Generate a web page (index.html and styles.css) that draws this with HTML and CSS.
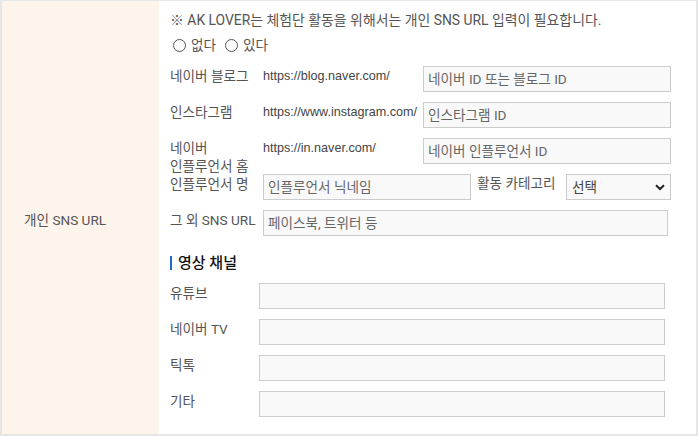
FILE: index.html
```html
<!DOCTYPE html>
<html lang="ko">
<head>
<meta charset="utf-8">
<link rel="stylesheet" href="styles.css">
</head>
<body>
<div class="frame">
  <div class="head-cell">개인 SNS URL</div>
  <div class="body-cell">
    <p class="notice">※ AK LOVER는 체험단 활동을 위해서는 개인 SNS URL 입력이 필요합니다.</p>
    <div class="radios">
      <label class="radio"><input type="radio" name="sns"><span>없다</span></label>
      <label class="radio"><input type="radio" name="sns"><span>있다</span></label>
    </div>
    <div class="rows">
      <div class="row">
        <span class="lbl">네이버 블로그</span>
        <span class="url">https://blog.naver.com/</span>
        <input class="field f-url" type="text" placeholder="네이버 ID 또는 블로그 ID">
      </div>
      <div class="row">
        <span class="lbl">인스타그램</span>
        <span class="url">https://www.instagram.com/</span>
        <input class="field f-url" type="text" placeholder="인스타그램 ID">
      </div>
      <div class="row">
        <span class="lbl lbl-2l">네이버<br>인플루언서 홈</span>
        <span class="url">https://in.naver.com/</span>
        <input class="field f-url" type="text" placeholder="네이버 인플루언서 ID">
      </div>
      <div class="row">
        <span class="lbl">인플루언서 명</span>
        <input class="field f-nick" type="text" placeholder="인플루언서 닉네임">
        <span class="cat">활동 카테고리</span>
        <select class="field f-sel"><option>선택</option></select>
      </div>
      <div class="row">
        <span class="lbl">그 외 SNS URL</span>
        <input class="field f-etc" type="text" placeholder="페이스북, 트위터 등">
      </div>
    </div>
    <h3 class="sub">영상 채널</h3>
    <div class="rows rows2">
      <div class="row"><span class="lbl2">유튜브</span><input class="field f-vid" type="text"></div>
      <div class="row"><span class="lbl2">네이버 TV</span><input class="field f-vid" type="text"></div>
      <div class="row"><span class="lbl2">틱톡</span><input class="field f-vid" type="text"></div>
      <div class="row"><span class="lbl2">기타</span><input class="field f-vid" type="text"></div>
    </div>
  </div>
</div>
</body>
</html>
```
FILE: styles.css
```css
* { box-sizing: border-box; }
html, body { margin: 0; padding: 0; background: #fff; }
body {
  font-family: "Roboto", "Noto Sans CJK KR", sans-serif;
  font-size: 13.6px;
  color: #555;
  line-height: 18px;
}
.frame {
  width: 698px;
  height: 436px;
  display: flex;
  border-top: 1px solid #e6e6e6;
  border-left: 2px solid #e6e6e6;
  border-right: 2px solid #e6e6e6;
  border-bottom: 2px solid #e6e6e6;
}
.head-cell {
  width: 157px;
  flex: none;
  background: #fdf4ec;
  display: flex;
  align-items: center;
  padding-left: 22px;
  padding-top: 5px;
  color: #555;
}
.body-cell {
  flex: 1;
  padding: 9px 0 0 11px;
}
.notice {
  margin: 0;
  line-height: 20px;
  font-size: 13.9px;
  color: #555;
}
.radios {
  display: flex;
  gap: 9px;
  margin-top: 5px;
  padding-left: 3px;
  height: 20px;
  align-items: center;
}
.radio { display: flex; align-items: center; gap: 5px; }
.radio input {
  appearance: none;
  -webkit-appearance: none;
  width: 13px;
  height: 13px;
  margin: 0;
  border: 1px solid #555;
  border-radius: 50%;
  background: #fff;
}
.rows {
  display: flex;
  flex-direction: column;
  gap: 10px;
  margin-top: 11px;
}
.row {
  display: flex;
  height: 26px;
  align-items: flex-start;
}
.lbl {
  width: 93px;
  flex: none;
  padding-top: 1px;
  white-space: nowrap;
}
.lbl-2l { line-height: 18px; height: 36px; }
.url {
  width: 160px;
  flex: none;
  padding-top: 1px;
  color: #444;
  font-family: "Liberation Sans", sans-serif;
  font-size: 12.6px;
  white-space: nowrap;
}
.field {
  height: 26px;
  border: 1px solid #cccccc;
  background: #f9f9f9;
  font-family: inherit;
  font-size: 13.6px;
  color: #333;
  padding: 0 4px;
  margin: 0;
  outline: none;
}
.field::placeholder { color: #666; }
.f-url { width: 248px; }
.f-nick { width: 208px; }
.cat { width: 95px; flex: none; padding-left: 6px; white-space: nowrap; }
.f-sel {
  width: 105px;
  appearance: none;
  -webkit-appearance: none;
  color: #444;
  background: #f9f9f9 url("data:image/svg+xml;utf8,<svg xmlns='http://www.w3.org/2000/svg' width='10' height='7' viewBox='0 0 10 7'><path d='M1 1.2 L5 5 L9 1.2' fill='none' stroke='%23222' stroke-width='2'/></svg>") no-repeat right 5px center;
  padding-left: 5px;
}
.f-etc { width: 405px; }
.sub {
  margin: 17px 0 0 0;
  font-size: 15px;
  font-weight: 500;
  color: #111;
  line-height: 20px;
  display: flex;
  align-items: center;
  gap: 6px;
}
.sub::before {
  content: "";
  display: block;
  width: 2px;
  height: 14px;
  background: #1a6fc8;
}
.rows2 { margin-top: 10px; }
.lbl2 {
  width: 89px;
  flex: none;
  padding-top: 1px;
}
.f-vid { width: 406px; }
```
